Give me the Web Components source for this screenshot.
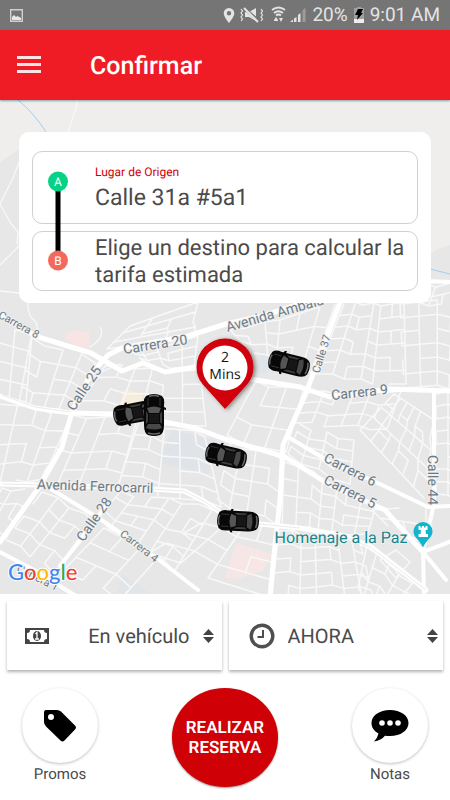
<!DOCTYPE html>
<html lang="es">
<head>
<meta charset="utf-8">
<meta name="viewport" content="width=device-width, initial-scale=1">
<title>Confirmar</title>
<style>
html, body {
  margin: 0;
  height: 100%;
}
body {
  font-family: Roboto, "Noto Sans", sans-serif;
  text-rendering: geometricPrecision;
  color: #4a4a4a;
  background: #fff;
}
</style>
</head>
<body>

<booking-app>
  <status-bar battery="20%" time="9:01 AM"></status-bar>
  <app-header>Confirmar</app-header>
  <city-map>
    <trip-card origin="Calle 31a #5a1">Elige un destino para calcular la tarifa estimada</trip-card>
  </city-map>
  <option-row>
    <option-select icon="cash" label="Forma de pago" value="En vehículo" align="right"></option-select>
    <option-select icon="clock" label="Hora" value="AHORA" align="left"></option-select>
  </option-row>
  <action-bar>
    <round-action icon="tag">Promos</round-action>
    <reserve-button>REALIZAR RESERVA</reserve-button>
    <round-action icon="chat">Notas</round-action>
  </action-bar>
</booking-app>

<script>
const ICONS = {
  cash: `<svg viewBox="0 0 24 16" width="24" height="16"><path fill="#444" fill-rule="evenodd" d="M0 0h24v16H0zM5 2Q5 5 2 5v6q3 0 3 3h14q0-3 3-3V5q-3 0-3-3z"/><ellipse cx="12" cy="8" rx="4" ry="5" fill="#444"/><path d="M10.500 6l1.500-1.500V11M10 11h4" fill="none" stroke="#fff" stroke-width="1.300"/></svg>`,
  clock: `<svg viewBox="0 0 26 26" width="26" height="26" fill="none" stroke="#4f4f4f"><circle cx="13" cy="13" r="10.800" stroke-width="3.400"/><path d="M14 7v7H8.500" stroke-width="2"/></svg>`,
  tag: `<svg viewBox="0 0 34 34" width="34" height="34"><path fill-rule="evenodd" d="M3 1h11q2 0 4 1.500l14 14q2 2 0 4L21.500 31.500q-2 2-4 0L3 17.500Q1 15.500 1 13V4q0-3 2-3zM8 5a3 3 0 1 0 0 6a3 3 0 1 0 0-6z"/></svg>`,
  chat: `<svg viewBox="0 0 38 34" width="38" height="34"><path d="M19 1C8.500 1 .5 6.500.5 14c0 4.500 2.500 8 7 10.500Q6.500 29 3 32.500 10 31.500 14 26.700q2.500.4 5 .4C29.500 27.100 37.500 21.500 37.500 14S29.500 1 19 1z"/><g fill="#fff"><circle cx="11" cy="14" r="2.800"/><circle cx="19" cy="14" r="2.800"/><circle cx="27" cy="14" r="2.800"/></g></svg>`,
};

class BookingApp extends HTMLElement {
  constructor() {
    super();
    this.attachShadow({mode: 'open'}).innerHTML = `
<style>
:host {
  display: flex;
  flex-direction: column;
  min-height: 100%;
  overflow: hidden;
}
</style>
<slot></slot>
    `;
  }
}

class StatusBar extends HTMLElement {
  constructor() {
    super();
    this.attachShadow({mode: 'open'}).innerHTML = `
<style>
:host {
  display: flex;
  align-items: center;
  justify-content: space-between;
  height: 30px;
  padding: 0 10px;
  background: #757575;
  color: #e4e4e4;
  font-size: 19px;
  line-height: 32px;
}
.right {
  display: flex;
  align-items: center;
  gap: 6px;
}
svg {
  display: block;
}
</style>
<svg width="13" height="13" viewBox="0 0 13 13"><path d="M.7.7h11.600v11.600H.7z" fill="none" stroke="#d0d0d0" stroke-width="1.400"/><path d="M2 11V8l2-2 2 2 1.500-1L11 9v2z" fill="#e8e8e8"/></svg>
<div class="right">
  <svg width="83" height="18" viewBox="222 6 83 18" fill="#e4e4e4">
    <path fill-rule="evenodd" d="M228 8a5.300 5.300 0 0 0-5.300 5.300C222.700 17 228 23 228 23s5.300-6 5.300-9.700A5.300 5.300 0 0 0 228 8zm0 3a2.200 2.200 0 1 1 0 4.400a2.200 2.200 0 0 1 0-4.400z"/>
    <path d="M244 12h4l7-4v13l-7-4h-4z"/>
    <path d="M244 9l14 12" stroke="#757575" stroke-width="3"/>
    <path d="M243 8l14 14" stroke="#e4e4e4" stroke-width="2"/>
    <path d="M240 9l1.500 2-1.500 2 1.500 2-1.500 2 1.500 2-1.500 2M260 9l1.500 2-1.500 2 1.500 2-1.500 2 1.500 2-1.500 2" fill="none" stroke="#e4e4e4" stroke-width="1.200"/>
    <path d="M271 10q6.500-5 13 0M273 13q4.500-3.500 9 0M275 15.500q2.500-2 5 0" fill="none" stroke="#e4e4e4" stroke-width="1.800"/>
    <path d="M273 20l2-3 2 3v1h-4zM278 18h4l-2 4z"/>
    <path d="M289 22l3-2.500V22zM293 18.500l2.500-1.500v5H293zM297 15l2.500-2v9H297z"/>
    <path d="M301.500 10.500l3-3V22h-3z" opacity=".35"/>
  </svg>
  <span id="battery"></span>
  <svg width="10" height="16" viewBox="0 0 10 16"><path d="M3 0h4v1h3v15H0V1h3z" fill="#a0a0a0"/><path d="M0 12h10v4H0z" fill="#eee"/><path d="M4 2h5L7 6h2l-6 7 1-5H1z" fill="#000"/></svg>
  <span id="time"></span>
</div>
    `;
  }

  connectedCallback() {
    this.shadowRoot.getElementById('battery').textContent = this.getAttribute('battery');
    this.shadowRoot.getElementById('time').textContent = this.getAttribute('time');
  }
}

class AppHeader extends HTMLElement {
  constructor() {
    super();
    this.attachShadow({mode: 'open'}).innerHTML = `
<style>
:host {
  display: flex;
  align-items: center;
  gap: 49px;
  height: 70px;
  padding: 0 17px;
  background: #ef1c25;
  color: #fff;
  box-shadow: 0 1px 2px rgba(0, 60, 70, 0.45);
  z-index: 1;
}
button {
  display: block;
  padding: 0;
  border: 0;
  background: none;
}
svg {
  display: block;
}
h1 {
  margin: 0;
  padding-top: 4px;
  font-size: 25px;
  font-weight: 500;
  line-height: 32px;
}
</style>
<button aria-label="Menú"><svg width="24" height="18" viewBox="0 0 24 18" fill="#ffe4e5"><path d="M0 0h24v3H0zM0 7h24v3H0zM0 14h24v3H0z"/></svg></button>
<h1><slot></slot></h1>
    `;
  }
}

/* Blocks of side streets: four corners clockwise from the top left, then columns and rows. */
const BLOCKS = [
  [0, 322, 30, 337, 24, 404, -6, 394, 2, 4],
  [30, 338, 96, 362, 70, 413, 18, 404, 4, 4],
  [108, 348, 128, 328, 196, 304, 194, 336, 4, 3],
  [128, 352, 196, 338, 192, 368, 142, 364, 5, 3],
  [105, 366, 198, 372, 204, 428, 74, 412, 6, 4],
  [0, 402, 70, 416, 42, 480, -14, 484, 4, 4],
  [72, 416, 138, 418, 118, 490, 38, 484, 4, 4],
  [140, 420, 206, 436, 222, 506, 118, 488, 5, 5],
  [0, 490, 36, 490, 8, 536, -20, 528, 3, 3],
  [42, 492, 98, 522, 56, 572, 6, 540, 4, 4],
  [106, 526, 156, 560, 120, 600, 64, 570, 3, 3],
  [120, 492, 214, 508, 176, 570, 98, 518, 6, 4],
  [220, 512, 276, 530, 270, 600, 150, 552, 4, 4],
  [228, 332, 336, 304, 312, 372, 244, 348, 6, 3],
  [344, 304, 402, 304, 404, 386, 316, 374, 6, 6],
  [402, 302, 452, 302, 450, 388, 406, 386, 3, 6],
  [255, 382, 302, 390, 284, 454, 226, 436, 3, 3],
  [308, 392, 400, 392, 386, 430, 296, 422, 6, 3],
  [298, 426, 354, 440, 350, 484, 286, 456, 4, 4],
  [360, 430, 394, 394, 434, 420, 424, 498, 5, 6],
  [286, 460, 374, 506, 366, 536, 284, 526, 7, 4],
  [230, 443, 282, 458, 278, 524, 216, 500, 4, 4],
  [280, 530, 362, 540, 376, 600, 272, 600, 7, 5],
  [366, 542, 424, 594, 400, 614, 356, 590, 5, 3],
  [436, 394, 456, 392, 456, 500, 436, 494, 2, 8],
  [374, 508, 424, 508, 424, 546, 390, 524, 2, 2],
  [430, 286, 452, 284, 452, 304, 420, 304, 3, 2],
];

function streets() {
  const mix = (a, b, t) => a + (b - a) * t;
  let d = '';
  BLOCKS.forEach((block, k) => {
    const [ax, ay, bx, by, cx, cy, dx, dy, cols, rows] = block;
    const point = (u, v, i, j) => {
      const wobble = ((i * 7 + j * 5 + k * 3) % 5) - 2;
      const x = mix(mix(ax, bx, u), mix(dx, cx, u), v) + wobble;
      const y = mix(mix(ay, by, u), mix(dy, cy, u), v) - wobble;
      return `${x.toFixed(1)} ${y.toFixed(1)}`;
    };
    for (let j = 0; j <= rows; j++) {
      for (let i = 0; i <= cols; i++) {
        const from = point(i / cols, j / rows, i, j);
        // every so often a street is missing, which leaves a longer block
        if (i < cols && (i * 3 + j * 5 + k) % 7) {
          d += `M${from}L${point((i + 1) / cols, j / rows, i + 1, j)}`;
        }
        if (j < rows && (i * 5 + j * 3 + k) % 6) {
          d += `M${from}L${point(i / cols, (j + 1) / rows, i, j + 1)}`;
        }
      }
    }
  });
  return d;
}

class CityMap extends HTMLElement {
  constructor() {
    super();
    this.attachShadow({mode: 'open'}).innerHTML = `
<style>
:host {
  display: block;
  position: relative;
  flex: 1 0 auto;
  min-height: 494px;
  box-sizing: border-box;
  padding: 32px 19px;
  overflow: hidden;
  background: #e7e7e7;
}
svg {
  position: absolute;
  inset: 0;
  width: 100%;
  height: 100%;
}
::slotted(*) {
  position: relative;
}
.labels text {
  fill: #6d7a84;
  stroke: #f0f0f0;
  stroke-width: 2px;
  paint-order: stroke;
  font-size: 14px;
  text-anchor: middle;
}
.labels .small {
  font-size: 11px;
}
.labels .place {
  fill: #15868c;
  font-size: 16px;
}
.eta {
  font-family: "Open Sans", sans-serif;
  font-size: 14px;
  fill: #111;
  text-anchor: middle;
}
.logo {
  font-family: Lato, sans-serif;
  font-size: 22px;
  font-weight: 500;
  stroke: #fff;
  stroke-width: 2px;
  paint-order: stroke;
}
</style>
<svg viewBox="0 100 450 494" preserveAspectRatio="xMidYMid slice">
  <defs>
    <symbol id="car" viewBox="0 0 44 24" width="44" height="24">
      <path d="M3 4Q6 1 12 2h2l1-2h2l-.5 2H32q8 0 10 4 2 6 0 12-2 4-10 4H16.500l.5 2h-2l-1-2h-2q-6 1-9-2Q-1 12 3 4z" fill="#080808"/>
      <path d="M3.500 7Q1.500 12 3.500 17M40 6q2 6 0 12" fill="none" stroke="#666" stroke-width="1.500"/>
      <path d="M15 5q-3 7 0 14l5-2V7z" fill="#555"/>
      <path d="M31 6l4-2q3 8 0 16l-4-2z" fill="#484848"/>
      <path d="M18 4h13l-2 2h-8zM18 20h13l-2-2h-8z" fill="#3c3c3c"/>
      <path d="M21 7h9v10h-9z" fill="#161616"/>
      <path d="M5 6h8M5 18h8" stroke="#333"/>
    </symbol>
    <filter id="shade" x="-30%" y="-30%" width="160%" height="160%"><feDropShadow dx="2" dy="1" stdDeviation="2" flood-opacity=".45"/></filter>
  </defs>
  <path d="M0 100H450V245L443 247 436 250 430 254 415 180 20 149 0 162z" fill="#efeeec"/>
  <path d="M65 335l9-5 6 2 9-1 1 9 1 8-10-1-9-4-7-3z" fill="#f7e4e3"/>
  <path d="M124 390l19 3-2 15-21-3z" fill="#f5ecd9"/>
  <path d="M172 430l44 10-8 34-51-11z" fill="#e0e4e8"/>
  <path d="M261 350l10 9-5 15-12-3z" fill="#dfe5ea"/>
  <path d="M236 543l36 11-9 17-26 8-12-1z" fill="#f6e6e6"/>
  <path d="M123 574l26 19h-32z" fill="#e0e5e9"/>
  <path d="M18 100Q34 113 46 132M430 269l20 5" fill="none" stroke="#9ad0f5"/>
  <g fill="none" stroke="#f8f8f8" stroke-linejoin="round" stroke-linecap="round">
    <path id="streets" stroke-width="1.500"/>
    <path d="M77 100l-1 8-8 24M20 160l-8 20-12 24 10 18 8 10-1 12M0 265l20-20M0 291l19 2M28 302q-1 14 8 20l3 12M90 347q16-10 10-20M80 391q14-18 40-27M420 540q8-3 12-14" stroke-width="1.300"/>
    <path d="M355 540l32 20 30 22M380 560l16-10 14 12-14 16zM385 561l12 10" stroke-width="1.500"/>
  </g>
  <g fill="none" stroke="#fff" stroke-linejoin="round" stroke-linecap="round">
    <g stroke-width="5">
      <path d="M0 314L35 336 91 353 122 371 143 363 165 372 196 367M250 379L300 387 330 397 388 389 452 391"/>
      <path d="M0 542L40 486 62 447 72 412 90 375 108 355 122 348 188 336 226 324 262 316 300 304"/>
      <path d="M0 396L35 408 70 413 115 414 165 422 195 428 225 439 285 457 330 485 385 510 408 536 423 552"/>
      <path d="M341 300L322 350 306 393 283 445 280 500 275 545 270 596"/>
      <path d="M0 484L80 486 150 489 184 491 204 501 224 515 260 524 300 528 345 536 370 546 426 590"/>
    </g>
    <g stroke-width="4">
      <path d="M288 437L330 462 382 485 428 507 452 506M423 552L424 596M423 552L452 541"/>
      <path d="M51 489L100 519 150 553 198 590M0 552L34 570 76 596"/>
      <path d="M106 506L76 545 60 566M434 390V504L423 552 446 580M425 281L452 282"/>
    </g>
  </g>
  <path d="M2 395L35 407 70 412M2 484L80 486 150 489 184 491 204 501 224 515 260 524 300 528M340 535L370 547 426 590" fill="none" stroke="#e4e4e4" stroke-width=".8"/>
  <g class="labels">
    <text class="small" transform="translate(17 328) rotate(29)">Carrera 8</text>
    <text transform="translate(156 349) rotate(-9)">Carrera 20</text>
    <text transform="translate(88 391) rotate(-56)">Calle 25</text>
    <text transform="translate(276 318) rotate(-16)">Avenida Ambalá</text>
    <text class="small" transform="translate(325 355) rotate(-73)">Calle 37</text>
    <text transform="translate(360 397) rotate(-6)">Carrera 9</text>
    <text transform="translate(95 491) rotate(2)">Avenida Ferrocarril</text>
    <text transform="translate(98 522) rotate(-55)">Calle 28</text>
    <text class="small" transform="translate(137 549) rotate(38)">Carrera 4</text>
    <text class="small" transform="translate(36 581) rotate(27)">Carrera 1</text>
    <text transform="translate(348 474) rotate(27)">Carrera 6</text>
    <text transform="translate(348 496) rotate(27)">Carrera 5</text>
    <text transform="translate(428 480) rotate(90)">Calle 44</text>
    <text class="place" x="341" y="543">Homenaje a la Paz</text>
  </g>
  <g>
    <path d="M423 522a9.500 9.500 0 0 0-9.500 9.500c0 6 6 8 9.500 16 3.500-8 9.500-10 9.500-16a9.500 9.500 0 0 0-9.500-9.500z" fill="#12b5cb"/>
    <path d="M418.500 526h2v1.500h1.500V526h2v1.500h1.500V526h2v4h-2l.5 4h2v3h-9.500v-3h2l.5-4h-2.500z" fill="#fff"/>
  </g>
  <text class="logo" x="8" y="580"><tspan fill="#4285f4">G</tspan><tspan fill="#ea4335">o</tspan><tspan fill="#fbbc05">o</tspan><tspan fill="#4285f4">g</tspan><tspan fill="#34a853">l</tspan><tspan fill="#ea4335">e</tspan></text>
  <use href="#car" transform="translate(134 413) rotate(-11) translate(-22 -12)"/>
  <use href="#car" transform="translate(154 415) rotate(90) translate(-22 -12)"/>
  <use href="#car" transform="translate(289 364) rotate(14) translate(-22 -12)"/>
  <use href="#car" transform="translate(226 456) rotate(13) translate(-22 -12)"/>
  <use href="#car" transform="translate(238 521) rotate(3) translate(-22 -12)"/>
  <g>
    <path d="M225 338.500a28.500 28.500 0 0 0-28.500 28.500q0 10 6 17L225 409l22.500-25q6-7 6-17a28.500 28.500 0 0 0-28.500-28.500z" fill="#d00007" filter="url(#shade)"/>
    <circle cx="225" cy="368" r="22.500" fill="#fff"/>
    <text class="eta"><tspan x="225" y="362">2</tspan><tspan x="225" y="379">Mins</tspan></text>
  </g>
</svg>
<slot></slot>
    `;
    this.shadowRoot.getElementById('streets').setAttribute('d', streets());
  }
}

class TripCard extends HTMLElement {
  constructor() {
    super();
    this.attachShadow({mode: 'open'}).innerHTML = `
<style>
:host {
  display: grid;
  gap: 7px;
  padding: 19px 13px 12px;
  border-radius: 10px;
  background: #fff;
}
.stop {
  display: grid;
  grid-template-columns: 62px 1fr;
  box-sizing: border-box;
  border: 1px solid #d0d0d0;
  border-radius: 10px;
  background: none;
  text-align: left;
}
.origin {
  height: 73px;
}
.destination {
  height: 60px;
  padding: 2px 0 0;
  align-items: center;
}
.fields {
  display: flex;
  flex-direction: column;
  justify-content: center;
  padding-top: 3px;
}
label {
  font-size: 12px;
  line-height: 16px;
  color: #d00007;
}
input, .destination {
  font-family: inherit;
  font-size: 23px;
  line-height: 27px;
  text-rendering: inherit;
  color: #4a4a4a;
}
.destination {
  font-size: 22px;
}
input {
  width: 100%;
  height: 34px;
  padding: 0;
  border: 0;
  background: none;
}
svg {
  position: absolute;
  left: 29px;
  top: 39px;
}
svg text {
  font-size: 12px;
  fill: #fff;
  text-anchor: middle;
}
</style>
<div class="stop origin">
  <span></span>
  <div class="fields">
    <label for="origin">Lugar de Origen</label>
    <input id="origin" type="text">
  </div>
</div>
<button class="stop destination"><span></span><slot></slot></button>
<svg width="20" height="100" viewBox="0 0 20 100">
  <path d="M10 10v80" stroke="#000" stroke-width="5"/>
  <circle cx="10" cy="10.500" r="10" fill="#06d184"/>
  <circle cx="10" cy="89.500" r="10" fill="#f4695d"/>
  <text x="10" y="15">A</text>
  <text x="10" y="94">B</text>
</svg>
    `;
  }

  connectedCallback() {
    this.shadowRoot.getElementById('origin').value = this.getAttribute('origin');
  }
}

class OptionRow extends HTMLElement {
  constructor() {
    super();
    this.attachShadow({mode: 'open'}).innerHTML = `
<style>
:host {
  display: grid;
  grid-template-columns: 1fr 1fr;
  gap: 7px;
  padding: 7px 7px 0;
}
</style>
<slot></slot>
    `;
  }
}

class OptionSelect extends HTMLElement {
  constructor() {
    super();
    this.attachShadow({mode: 'open'}).innerHTML = `
<style>
:host {
  display: grid;
  grid-template-columns: 26px 1fr;
  align-items: center;
  column-gap: 13px;
  height: 69px;
  box-sizing: border-box;
  padding: 0 5px 0 20px;
  background: #fff;
  box-shadow: 0 2px 3px rgba(0, 0, 0, 0.3);
}
:host([align="right"]) {
  padding: 0 8px 0 18px;
}
:host([align="right"]) select {
  text-align-last: right;
}
label, svg {
  display: block;
}
.box {
  display: flex;
  align-items: center;
}
select {
  appearance: none;
  flex: 1;
  min-width: 0;
  height: 40px;
  padding: 0;
  border: 0;
  background: none;
  font-family: inherit;
  font-size: 20px;
  text-rendering: inherit;
  color: #4a4a4a;
}
.arrows {
  margin-left: 13px;
}
</style>
<label for="choice"></label>
<div class="box">
  <select id="choice"><option></option></select>
  <svg class="arrows" width="11" height="14" viewBox="0 0 11 14" fill="#444"><path d="M5.500 0L11 6H0zM0 8h11l-5.500 6z"/></svg>
</div>
    `;
  }

  connectedCallback() {
    const label = this.shadowRoot.querySelector('label');
    label.innerHTML = ICONS[this.getAttribute('icon')];
    label.setAttribute('aria-label', this.getAttribute('label'));
    this.shadowRoot.querySelector('option').textContent = this.getAttribute('value');
  }
}

class ActionBar extends HTMLElement {
  constructor() {
    super();
    this.attachShadow({mode: 'open'}).innerHTML = `
<style>
:host {
  display: flex;
  justify-content: space-between;
  align-items: flex-start;
  padding: 18px 22px 13px;
}
</style>
<slot></slot>
    `;
  }
}

class RoundAction extends HTMLElement {
  constructor() {
    super();
    this.attachShadow({mode: 'open'}).innerHTML = `
<style>
:host {
  display: block;
}
button {
  display: grid;
  justify-items: center;
  gap: 1px;
  padding: 0;
  border: 0;
  background: none;
  font-family: inherit;
  font-size: 15px;
  line-height: 20px;
  text-rendering: inherit;
  color: #4a4a4a;
}
.disc {
  display: grid;
  place-items: center;
  width: 76px;
  height: 75px;
  border-radius: 50%;
  background: #fff;
  box-shadow: 0 1px 3px rgba(0, 0, 0, 0.25);
}
</style>
<button><span class="disc"></span><slot></slot></button>
    `;
  }

  connectedCallback() {
    this.shadowRoot.querySelector('.disc').innerHTML = ICONS[this.getAttribute('icon')];
  }
}

class ReserveButton extends HTMLElement {
  constructor() {
    super();
    this.attachShadow({mode: 'open'}).innerHTML = `
<style>
:host {
  display: block;
}
button {
  width: 106px;
  height: 99px;
  padding: 0 8px;
  border: 0;
  border-radius: 50%;
  background: #d00007;
  box-shadow: 0 1px 2px rgba(0, 0, 0, 0.4);
  color: #fff;
  font-family: inherit;
  font-size: 17px;
  font-weight: 600;
  line-height: 20px;
  text-rendering: inherit;
}
</style>
<button><slot></slot></button>
    `;
  }
}

window.customElements.define('booking-app', BookingApp);
window.customElements.define('status-bar', StatusBar);
window.customElements.define('app-header', AppHeader);
window.customElements.define('city-map', CityMap);
window.customElements.define('trip-card', TripCard);
window.customElements.define('option-row', OptionRow);
window.customElements.define('option-select', OptionSelect);
window.customElements.define('action-bar', ActionBar);
window.customElements.define('round-action', RoundAction);
window.customElements.define('reserve-button', ReserveButton);
</script>
</body>
</html>
